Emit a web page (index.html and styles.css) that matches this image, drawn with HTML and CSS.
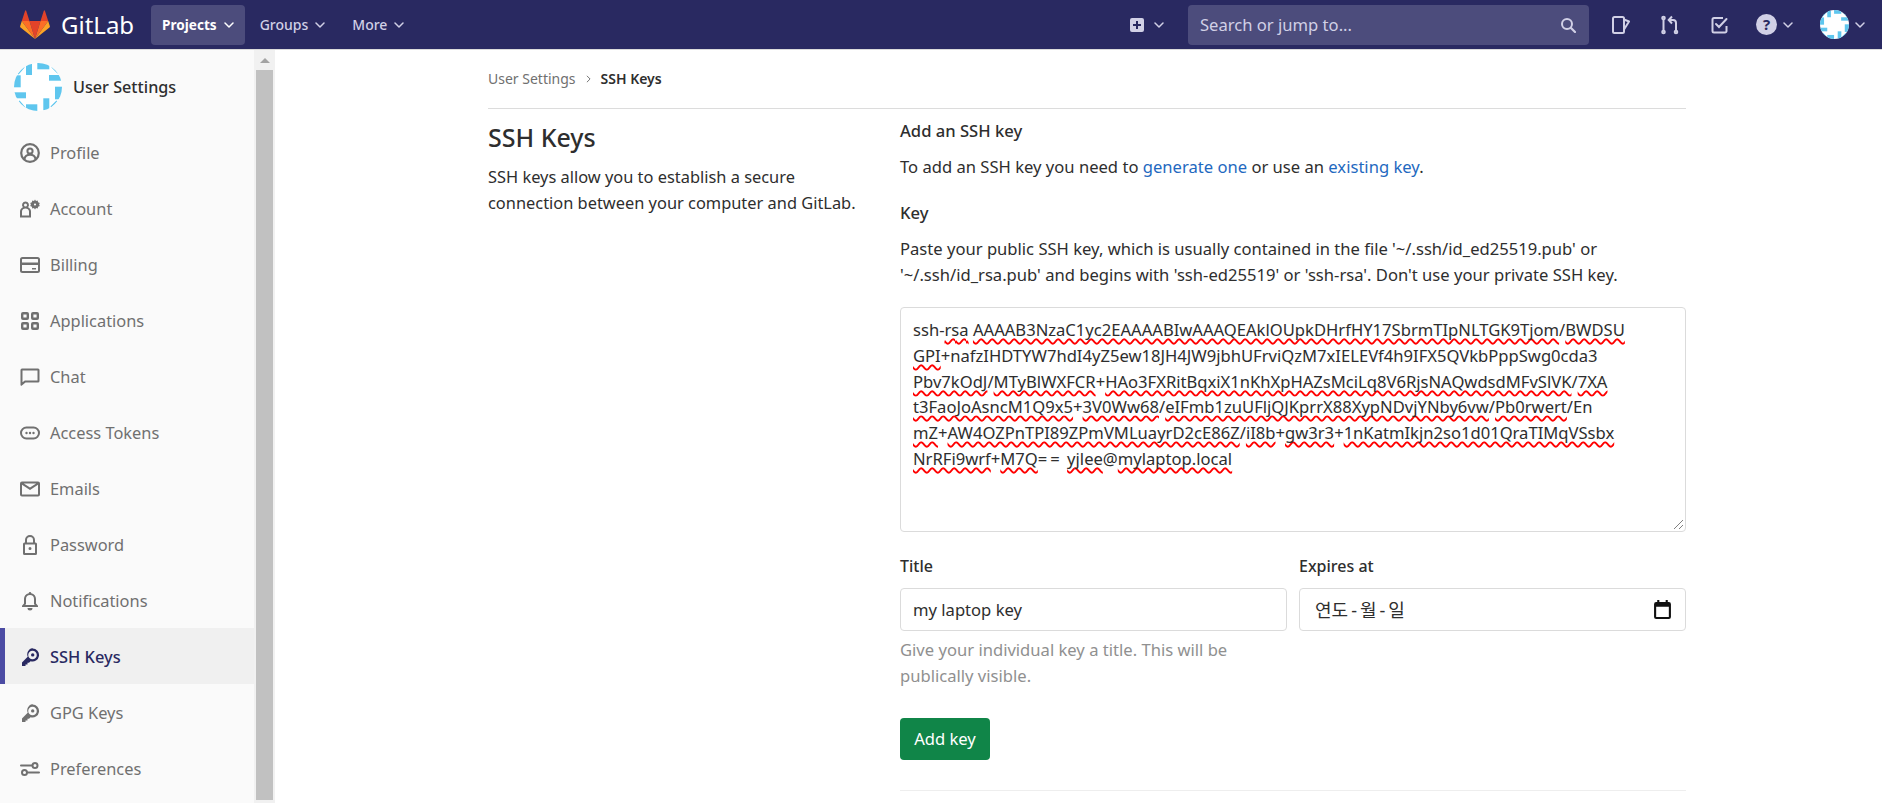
FILE: index.html
```html
<!DOCTYPE html>
<html>
	<head>
		<meta charset="UTF-8">
		<title>SSH Keys · User Settings · GitLab</title>
		<link rel="stylesheet" href="styles.css">
	</head>
	<body>
		<svg class="defs" width="0" height="0">
			<defs>
				<clipPath id="avatar-clip"><circle cx="24" cy="24" r="24"/></clipPath>
				<symbol id="avatar" viewBox="0 0 48 48">
					<g clip-path="url(#avatar-clip)">
						<rect width="48" height="48" fill="#fff"/>
						<g fill="#5fc6ee">
							<rect x="12" y="1" width="6" height="11"/>
							<rect x="23.3" y="0" width="12" height="6.3"/>
							<rect x="35" y="12" width="12" height="5.7"/>
							<rect x="41" y="23.7" width="7" height="12.6"/>
							<rect x="29.3" y="35.3" width="6" height="12"/>
							<rect x="12" y="41.3" width="11.3" height="7"/>
							<rect x="0" y="29.3" width="12" height="6"/>
							<rect x="0" y="12.3" width="6.7" height="12"/>
						</g>
						<g stroke="#5fc6ee" stroke-width="1.6" fill="none">
							<path d="M4 11 10 4"/>
							<path d="M38 4 44 10"/>
							<path d="M37 44 43 38"/>
							<path d="M5 38 11 45"/>
						</g>
					</g>
				</symbol>
				<symbol id="chevron" viewBox="0 0 10 6">
					<path d="M1 1l4 4 4-4" fill="none" stroke="currentColor" stroke-width="1.5" stroke-linecap="round" stroke-linejoin="round"/>
				</symbol>
				<symbol id="key" viewBox="0 0 20 20">
					<path fill="currentColor" fill-rule="evenodd" d="M12.500 1.500a6.500 6.500 0 1 1-1.900 12.700L9 15.800H7.500v1.700H5.500v1.500H2v-3.500l5.700-5.700a6.500 6.500 0 0 1 4.800-8.800zm0 2.200a4.300 4.300 0 1 0 0 8.600 4.300 4.300 0 0 0 0-8.600zm.2 2.500a1.700 1.700 0 1 1 0 3.400 1.700 1.700 0 0 1 0-3.400z"/>
				</symbol>
			</defs>
		</svg>

		<header class="navbar">
			<a href="#" class="brand">
				<svg class="tanuki" viewBox="0 0 25 24" width="30" height="29">
					<path fill="#e24329" d="M12.500 24 17.100 9H7.900z"/>
					<path fill="#fc6d26" d="M12.500 24 7.900 9H1.500zM12.500 24 17.100 9h6.400z"/>
					<path fill="#fca326" d="M1.500 9 .1 13.400a1 1 0 0 0 .35 1.100L12.500 24zM23.500 9l1.400 4.400a1 1 0 0 1-.35 1.100L12.500 24z"/>
					<path fill="#e24329" d="M1.500 9h6.400L5.150.5a.5.5 0 0 0-.9 0zM23.500 9h-6.400L19.850.5a.5.5 0 0 1 .9 0z"/>
				</svg>
				<span>GitLab</span>
			</a>
			<nav class="nav-links">
				<a href="#" class="nav-link active">Projects <svg class="chev"><use href="#chevron"/></svg></a>
				<a href="#" class="nav-link">Groups <svg class="chev"><use href="#chevron"/></svg></a>
				<a href="#" class="nav-link">More <svg class="chev"><use href="#chevron"/></svg></a>
			</nav>
			<div class="nav-right">
				<a href="#" class="nav-new">
					<svg viewBox="0 0 16 16" width="16" height="16"><path fill-rule="evenodd" d="M3 1h10a2 2 0 0 1 2 2v10a2 2 0 0 1-2 2H3a2 2 0 0 1-2-2V3a2 2 0 0 1 2-2zm4 3v3H4v2h3v3h2V9h3V7H9V4z" fill="currentColor"/></svg>
					<svg class="chev"><use href="#chevron"/></svg>
				</a>
				<div class="search">
					<span>Search or jump to...</span>
					<svg viewBox="0 0 16 16" width="16" height="16"><circle cx="7" cy="7" r="5" fill="none" stroke="currentColor" stroke-width="2"/><path d="M11 11l4 4" stroke="currentColor" stroke-width="2.200" stroke-linecap="round"/></svg>
				</div>
				<a href="#" class="nav-icon issues">
					<svg viewBox="0 0 18 18" width="18" height="18" fill="none" stroke="currentColor" stroke-width="2" stroke-linejoin="round"><rect x="1" y="1" width="11" height="16" rx="1.500"/><path d="M12 3.500 17 5.500 12 13.500"/></svg>
				</a>
				<a href="#" class="nav-icon mrs">
					<svg viewBox="0 0 20 20" width="20" height="20" fill="none" stroke="currentColor" stroke-width="2"><circle cx="3.500" cy="3" r="1.300"/><circle cx="3.500" cy="17" r="1.300"/><circle cx="16" cy="17" r="1.300"/><path d="M3.500 4.500v11M16 15.500V8a3 3 0 0 0-3-3H9.500"/><path d="M12 1.500 8.700 5l3.300 3.500"/></svg>
				</a>
				<a href="#" class="nav-icon todos">
					<svg viewBox="0 0 18 18" width="18" height="18" fill="none" stroke="currentColor" stroke-width="2"><path d="M15.500 10v5a1.500 1.500 0 0 1-1.500 1.500H3A1.500 1.500 0 0 1 1.500 15V3.500A1.500 1.500 0 0 1 3 2h9"/><path d="M5 8l3 3 7.500-8" stroke-linecap="round"/></svg>
				</a>
				<a href="#" class="nav-icon nav-help">
					<svg viewBox="0 0 21 21" width="21" height="21"><circle cx="10.500" cy="10.500" r="10.500" fill="currentColor"/><text x="10.500" y="16" text-anchor="middle" class="help-mark">?</text></svg>
					<svg class="chev"><use href="#chevron"/></svg>
				</a>
				<a href="#" class="nav-icon user">
					<svg width="29" height="29"><use href="#avatar"/></svg>
					<svg class="chev"><use href="#chevron"/></svg>
				</a>
			</div>
		</header>

		<div class="layout">
			<aside class="sidebar">
				<div class="sidebar-list">
					<a href="#" class="sidebar-head">
						<svg width="48" height="48"><use href="#avatar"/></svg>
						<span>User Settings</span>
					</a>
					<a href="#" class="side-item">
						<svg viewBox="0 0 20 20"><circle cx="10" cy="10" r="8.800" fill="none" stroke="currentColor" stroke-width="2.200"/><circle cx="10" cy="8" r="2.600" fill="none" stroke="currentColor" stroke-width="2"/><path d="M4.500 16c.5-3 3-4.200 5.500-4.200s5 1.200 5.500 4.200" fill="none" stroke="currentColor" stroke-width="2"/></svg>
						<span>Profile</span>
					</a>
					<a href="#" class="side-item">
						<svg viewBox="0 0 20 20"><path fill-rule="evenodd" d="M5.500 2.500a3.500 3.500 0 0 1 2.600 5.800C9.800 9.300 11 10.500 11 12.500v6H0v-6c0-2 1.200-3.200 2.900-4.200A3.500 3.500 0 0 1 5.500 2.500zm0 2a1.500 1.500 0 1 0 0 3 1.500 1.500 0 0 0 0-3zM5.500 9.500C3.600 9.500 2 10.700 2 12.500v4h7v-4c0-1.800-1.600-3-3.500-3z" fill="currentColor"/><path fill-rule="evenodd" d="M15 .5l1 1.500 1.700-.4.4 1.700 1.700.6-.7 1.600.7 1.600-1.700.6-.4 1.700-1.700-.4-1 1.500-1-1.500-1.700.4-.4-1.700-1.700-.6.7-1.600-.7-1.600 1.700-.6.4-1.700 1.700.4zm0 3.900a1.100 1.100 0 1 0 0 2.200 1.100 1.100 0 0 0 0-2.200z" fill="currentColor"/></svg>
						<span>Account</span>
					</a>
					<a href="#" class="side-item">
						<svg viewBox="0 0 20 20"><path fill-rule="evenodd" d="M2.500 2h15A2.500 2.500 0 0 1 20 4.500v11a2.500 2.500 0 0 1-2.500 2.500h-15A2.500 2.500 0 0 1 0 15.500v-11A2.500 2.500 0 0 1 2.500 2zM2 7.500h16v-3a.5.500 0 0 0-.5-.5h-15a.5.500 0 0 0-.5.500zM2 10v5.500a.5.500 0 0 0 .5.500h15a.5.500 0 0 0 .5-.5V10zm10 3h4v1.500h-4z" fill="currentColor"/></svg>
						<span>Billing</span>
					</a>
					<a href="#" class="side-item">
						<svg viewBox="0 0 20 20" fill="none" stroke="currentColor" stroke-width="2.400"><rect x="2.200" y="2.200" width="5.600" height="5.600" rx=".8"/><rect x="12.200" y="2.200" width="5.600" height="5.600" rx=".8"/><rect x="2.200" y="12.200" width="5.600" height="5.600" rx=".8"/><rect x="12.200" y="12.200" width="5.600" height="5.600" rx=".8"/></svg>
						<span>Applications</span>
					</a>
					<a href="#" class="side-item">
						<svg viewBox="0 0 20 20"><path d="M2 1.500h16a1.500 1.500 0 0 1 1.500 1.500v11a1.500 1.500 0 0 1-1.500 1.500H5.500L1.600 18.700a.8.800 0 0 1-1.100-.6V3A1.500 1.500 0 0 1 2 1.500zm.5 2v11.700l2.300-1.700h12.700v-10z" fill="currentColor" fill-rule="evenodd"/></svg>
						<span>Chat</span>
					</a>
					<a href="#" class="side-item">
						<svg viewBox="0 0 20 20"><rect x="1" y="4.500" width="18" height="11" rx="5.500" fill="none" stroke="currentColor" stroke-width="2"/><circle cx="6.500" cy="10" r="1.200" fill="currentColor"/><circle cx="10" cy="10" r="1.200" fill="currentColor"/><circle cx="13.500" cy="10" r="1.200" fill="currentColor"/></svg>
						<span>Access Tokens</span>
					</a>
					<a href="#" class="side-item">
						<svg viewBox="0 0 20 20"><path fill-rule="evenodd" d="M2 2.500h16A2 2 0 0 1 20 4.500v11a2 2 0 0 1-2 2H2a2 2 0 0 1-2-2v-11a2 2 0 0 1 2-2zm0 3.300v9.700h16V5.800l-8 5.200zm1.800-1.300L10 8.600l6.200-4.100z" fill="currentColor"/></svg>
						<span>Emails</span>
					</a>
					<a href="#" class="side-item">
						<svg viewBox="0 0 20 20"><path fill-rule="evenodd" d="M10 0a5 5 0 0 1 5 5v2.500h.5A1.500 1.500 0 0 1 17 9v9.500a1.500 1.500 0 0 1-1.500 1.500h-11A1.500 1.500 0 0 1 3 18.500V9a1.500 1.500 0 0 1 1.500-1.500H5V5a5 5 0 0 1 5-5zm0 2a3 3 0 0 0-3 3v2.500h6V5a3 3 0 0 0-3-3zM5 9.500V18h10V9.500zm5 2.500a1.500 1.500 0 1 1 0 3 1.500 1.500 0 0 1 0-3z" fill="currentColor"/></svg>
						<span>Password</span>
					</a>
					<a href="#" class="side-item">
						<svg viewBox="0 0 20 20"><path fill-rule="evenodd" d="M10 1a1.300 1.300 0 0 1 1.300 1.200C14.200 2.800 16 5 16 8v4.500l2 2.300V16H2v-1.200l2-2.300V8c0-3 1.800-5.200 4.700-5.800A1.300 1.300 0 0 1 10 1zm0 3C7.500 4 6 5.600 6 8v5l-.8 1h9.600l-.8-1V8c0-2.400-1.500-4-4-4zM7.500 17h5a2.500 2.500 0 0 1-5 0z" fill="currentColor"/></svg>
						<span>Notifications</span>
					</a>
					<a href="#" class="side-item active">
						<svg><use href="#key"/></svg>
						<span>SSH Keys</span>
					</a>
					<a href="#" class="side-item">
						<svg><use href="#key"/></svg>
						<span>GPG Keys</span>
					</a>
					<a href="#" class="side-item">
						<svg viewBox="0 0 20 20" fill="none" stroke="currentColor" stroke-width="2"><path d="M1 6.500h11M8 13.500h11" stroke-linecap="round"/><circle cx="15" cy="6.500" r="2.500"/><circle cx="4.500" cy="13.500" r="2.500"/></svg>
						<span>Preferences</span>
					</a>
				</div>
				<div class="scrollbar">
					<div class="scroll-up"></div>
					<div class="scroll-thumb"></div>
				</div>
			</aside>

			<main class="content">
				<div class="breadcrumbs">
					<a href="#">User Settings</a>
					<svg viewBox="0 0 6 10" width="5" height="8"><path d="M1 1l4 4-4 4" fill="none" stroke="#707070" stroke-width="1.200"/></svg>
					<strong>SSH Keys</strong>
				</div>
				<div class="settings-row">
					<section class="settings-left">
						<h4>SSH Keys</h4>
						<p>SSH keys allow you to establish a secure connection between your computer and GitLab.</p>
					</section>
					<section class="settings-right">
						<h5>Add an SSH key</h5>
						<p class="intro">To add an SSH key you need to <a href="#">generate one</a> or use an <a href="#">existing key</a>.</p>
						<h5 class="key-label">Key</h5>
						<p class="intro">Paste your public SSH key, which is usually contained in the file '~/.ssh/id_ed25519.pub' or '~/.ssh/id_rsa.pub' and begins with 'ssh-ed25519' or 'ssh-rsa'. Don't use your private SSH key.</p>
						<div class="key-box">
							<div>ssh-<u>rsa</u> <u>AAAAB3NzaC1yc2EAAAABIwAAAQEAklOUpkDHrfHY17SbrmTIpNLTGK9Tjom</u>/<u>BWDSU</u></div>
							<div><u>GPI</u>+nafzIHDTYW7hdI4yZ5ew18JH4JW9jbhUFrviQzM7xIELEVf4h9IFX5QVkbPppSwg0cda3</div>
							<div><u>Pbv7kOdJ</u>/<u>MTyBlWXFCR</u>+<u>HAo3FXRitBqxiX1nKhXpHAZsMciLq8V6RjsNAQwdsdMFvSlVK</u>/<u>7XA</u></div>
							<div><u>t3FaoJoAsncM1Q9x5</u>+<u>3V0Ww68</u>/<u>eIFmb1zuUFljQJKprrX88XypNDvjYNby6vw</u>/<u>Pb0rwert</u>/En</div>
							<div><u>mZ</u>+<u>AW4OZPnTPI89ZPmVMLuayrD2cE86Z</u>/<u>iI8b</u>+<u>gw3r3</u>+<u>1nKatmIkjn2so1d01QraTIMqVSsbx</u></div>
							<div><u>NrRFi9wrf</u>+<u>M7Q</u><span class="eq">==</span> <u>yjlee</u>@<u>mylaptop.local</u></div>
							<svg class="grip" viewBox="0 0 11 11" width="11" height="11"><path d="M10 1 1 10M10 6 6 10" stroke="#808080" stroke-width="1"/></svg>
						</div>
						<div class="field-row">
							<div class="field">
								<label>Title</label>
								<div class="input">my laptop key</div>
								<p class="help">Give your individual key a title. This will be publically visible.</p>
							</div>
							<div class="field">
								<label>Expires at</label>
								<div class="input date">
									<span>연도<span class="sep">-</span>월<span class="sep">-</span>일</span>
									<svg viewBox="0 0 16 18" width="17" height="19"><path fill-rule="evenodd" d="M3 0h2v2h6V0h2v2h1a2 2 0 0 1 2 2v12a2 2 0 0 1-2 2H2a2 2 0 0 1-2-2V4a2 2 0 0 1 2-2h1zM2 6.500V16h12V6.500z" fill="#111"/></svg>
								</div>
							</div>
						</div>
						<button class="btn-add" type="button">Add key</button>
						<hr>
					</section>
				</div>
			</main>
		</div>
	</body>
</html>
```

FILE: styles.css
```css
* {
	margin:0;
	padding:0;
	box-sizing:border-box;
}
html, body {
	height:100%;
	overflow:hidden;
}
body {
	font-family:"Noto Sans","Noto Sans CJK KR",sans-serif;
	font-size:16.6px;
	line-height:26px;
	color:#2e2e2e;
	background:#fff;
	display:flex;
	flex-direction:column;
}
a {
	text-decoration:none;
	color:inherit;
}
.defs {
	display:block;
	height:0;
}
.chev {
	width:10px;
	height:6px;
	flex:none;
}

/* top bar */
.navbar {
	height:50px;
	flex:none;
	background:#292961;
	border-bottom:1px solid #dbdbdb;
	color:#d1d0e6;
	display:flex;
	align-items:center;
	padding-left:20px;
}
.brand {
	display:flex;
	align-items:center;
	gap:11px;
	color:#fff;
	width:131px;
	font-size:24px;
}
.nav-links {
	display:flex;
	gap:8px;
}
.nav-link {
	height:40px;
	padding:0 12px 0 7px;
	display:flex;
	align-items:center;
	gap:7px;
	font-size:14px;
	font-weight:500;
	border-radius:4px;
}
.nav-link.active {
	background:#4c4c7c;
	color:#fff;
	font-weight:700;
	font-size:13.6px;
	padding:0 11px;
}
.nav-right {
	margin-left:auto;
	display:flex;
	align-items:center;
	padding-right:17px;
}
.nav-new {
	display:flex;
	align-items:center;
	gap:9px;
	margin-right:24px;
}
.search {
	width:401px;
	height:40px;
	background:#4c4c7c;
	border-radius:4px;
	display:flex;
	align-items:center;
	justify-content:space-between;
	padding:0 13px 0 12px;
	margin-right:23px;
}
.nav-icon {
	display:flex;
	align-items:center;
	gap:6px;
}
.issues {
	margin-right:30px;
}
.mrs {
	margin-right:31px;
}
.todos {
	margin-right:27px;
}
.nav-help {
	margin-right:27px;
}
.help-mark {
	font-family:"Noto Sans",sans-serif;
	font-size:15px;
	font-weight:700;
	fill:#292961;
}

/* sidebar */
.layout {
	flex:1;
	display:flex;
	min-height:0;
}
.sidebar {
	width:275px;
	flex:none;
	display:flex;
}
.sidebar-list {
	width:254px;
	background:#fafafa;
	overflow:hidden;
}
.sidebar-head {
	height:74px;
	display:flex;
	align-items:center;
	gap:11px;
	padding-left:14px;
	font-size:16.2px;
	font-weight:500;
}
.side-item {
	height:56px;
	display:flex;
	align-items:center;
	gap:10px;
	padding:1px 0 0 20px;
	color:#707070;
	font-size:16.4px;
}
.side-item svg {
	width:20px;
	height:20px;
	flex:none;
}
.side-item.active {
	background:#f0f0f0;
	color:#292961;
	font-weight:500;
	box-shadow:inset 5px 0 0 #4b4ba3;
}
.scrollbar {
	width:21px;
	background:#f1f1f1;
	padding:0 2px;
	display:flex;
	flex-direction:column;
}
.scroll-up {
	height:20px;
	flex:none;
	display:flex;
	align-items:center;
	justify-content:center;
}
.scroll-up::before {
	content:"";
	border-left:5px solid transparent;
	border-right:5px solid transparent;
	border-bottom:5px solid #a3a3a3;
}
.scroll-thumb {
	flex:1;
	background:#c1c1c1;
	margin-bottom:3px;
}

/* main column */
.content {
	width:1198px;
	margin-left:213px;
	flex:none;
}
.breadcrumbs {
	height:59px;
	border-bottom:1px solid #dcdcdc;
	display:flex;
	align-items:center;
	gap:10px;
	font-size:14px;
	color:#707070;
}
.breadcrumbs strong {
	color:#2e2e2e;
	font-weight:600;
}
.settings-row {
	display:grid;
	grid-template-columns:412px 1fr;
}
.settings-left h4 {
	font-size:25px;
	line-height:30px;
	font-weight:500;
	margin-top:13px;
	margin-bottom:12px;
}
.settings-left p {
	width:390px;
	font-size:16.4px;
}
.settings-right {
	padding-top:9px;
}
.settings-right h5 {
	font-size:16.6px;
	font-weight:500;
}
.intro {
	margin-top:10px;
}
.intro a {
	color:#1f69c0;
}
.key-label {
	margin-top:20px;
}
.key-box {
	position:relative;
	height:225px;
	margin-top:19px;
	border:1px solid #dbdbdb;
	border-radius:4px;
	padding:9px 12px;
	line-height:25.8px;
	white-space:nowrap;
}
.key-box u {
	text-decoration:underline wavy #f00 1.5px;
	text-decoration-skip-ink:none;
	text-underline-offset:2px;
}
.eq {
	letter-spacing:3px;
}
.grip {
	position:absolute;
	right:1px;
	bottom:1px;
}
.field-row {
	display:grid;
	grid-template-columns:1fr 1fr;
	gap:12px;
	margin-top:21px;
}
.field label {
	display:block;
	font-size:16px;
	font-weight:500;
	margin-bottom:9px;
}
.input {
	height:43px;
	border:1px solid #dbdbdb;
	border-radius:4px;
	padding:0 12px;
	display:flex;
	align-items:center;
}
.input.date {
	justify-content:space-between;
	padding:0 14px 0 15px;
	font-size:18px;
}
.sep {
	margin:0 3px;
}
.help {
	color:#909090;
}
.field .help {
	margin-top:6px;
	width:340px;
}
.btn-add {
	display:block;
	margin-top:29px;
	height:42px;
	width:90px;
	background:#108548;
	color:#fff;
	border:0;
	border-radius:4px;
	font:inherit;
}
.settings-right hr {
	border:0;
	border-top:1px solid #eee;
	margin-top:30px;
}
```
